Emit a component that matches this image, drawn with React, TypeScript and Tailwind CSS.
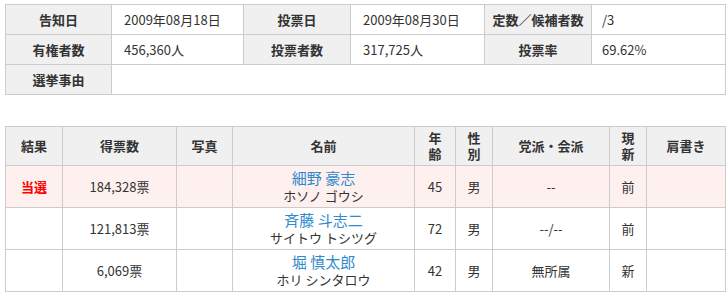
const FONT = "font-['Meiryo','Noto_Sans_CJK_JP',sans-serif]";

const th = "border border-[#cccccc] bg-[#f0f0f0] font-bold text-center";
const td = "border border-[#cccccc]";

const INFO: [string, string, string, string, string, string][] = [
  ["告知日", "2009年08月18日", "投票日", "2009年08月30日", "定数／候補者数", "/3"],
  ["有権者数", "456,360人", "投票者数", "317,725人", "投票率", "69.62%"],
];

type Row = {
  win: boolean;
  votes: string;
  name: string;
  kana: string;
  age: string;
  sex: string;
  party: string;
  status: string;
};

const ROWS: Row[] = [
  { win: true, votes: "184,328票", name: "細野 豪志", kana: "ホソノ ゴウシ", age: "45", sex: "男", party: "--", status: "前" },
  { win: false, votes: "121,813票", name: "斉藤 斗志二", kana: "サイトウ トシツグ", age: "72", sex: "男", party: "--/--", status: "前" },
  { win: false, votes: "6,069票", name: "堀 慎太郎", kana: "ホリ シンタロウ", age: "42", sex: "男", party: "無所属", status: "新" },
];

export default function App() {
  return (
    <div className={`${FONT} h-[293px] w-[727px] bg-white pl-[5px] pt-[4px] text-[13px] leading-[18px] text-[#333333]`}>
      {/* summary */}
      <table className="w-[720px] table-fixed border-collapse">
        <colgroup>
          <col className="w-[106px]" />
          <col className="w-[132px]" />
          <col className="w-[107px]" />
          <col className="w-[134px]" />
          <col className="w-[107px]" />
          <col className="w-[134px]" />
        </colgroup>
        <tbody>
          {INFO.map((r) => (
            <tr key={r[0]} className="h-[30px]">
              <th className={th}>{r[0]}</th>
              <td className={`${td} pl-[12px]`}>{r[1]}</td>
              <th className={th}>{r[2]}</th>
              <td className={`${td} pl-[12px]`}>{r[3]}</td>
              <th className={th}>{r[4]}</th>
              <td className={`${td} pl-[10px]`}>{r[5]}</td>
            </tr>
          ))}
          <tr className="h-[30px]">
            <th className={th}>選挙事由</th>
            <td className={td} colSpan={5}></td>
          </tr>
        </tbody>
      </table>

      {/* candidates */}
      <table className="mt-[31px] w-[720px] table-fixed border-collapse">
        <colgroup>
          <col className="w-[57px]" />
          <col className="w-[114px]" />
          <col className="w-[56px]" />
          <col className="w-[182px]" />
          <col className="w-[41px]" />
          <col className="w-[37px]" />
          <col className="w-[117px]" />
          <col className="w-[37px]" />
          <col className="w-[79px]" />
        </colgroup>
        <thead>
          <tr className="h-[39px]">
            <th className={th}>結果</th>
            <th className={th}>得票数</th>
            <th className={th}>写真</th>
            <th className={th}>名前</th>
            <th className={`${th} leading-[16px]`}>年<br />齢</th>
            <th className={`${th} leading-[16px]`}>性<br />別</th>
            <th className={th}>党派・会派</th>
            <th className={`${th} leading-[16px]`}>現<br />新</th>
            <th className={th}>肩書き</th>
          </tr>
        </thead>
        <tbody>
          {ROWS.map((r) => (
            <tr key={r.name} className={`h-[42px] text-center ${r.win ? "bg-[#fff0f0]" : "bg-white"}`}>
              <td className={`${td} font-bold text-[#ff0000]`}>{r.win ? "当選" : ""}</td>
              <td className={td}>{r.votes}</td>
              <td className={td}></td>
              <td className={`${td} leading-[18px]`}>
                <div className="text-[15px] text-[#2f89cc]">{r.name}</div>
                <div>{r.kana}</div>
              </td>
              <td className={td}>{r.age}</td>
              <td className={td}>{r.sex}</td>
              <td className={td}>{r.party}</td>
              <td className={td}>{r.status}</td>
              <td className={td}></td>
            </tr>
          ))}
        </tbody>
      </table>
    </div>
  );
}
